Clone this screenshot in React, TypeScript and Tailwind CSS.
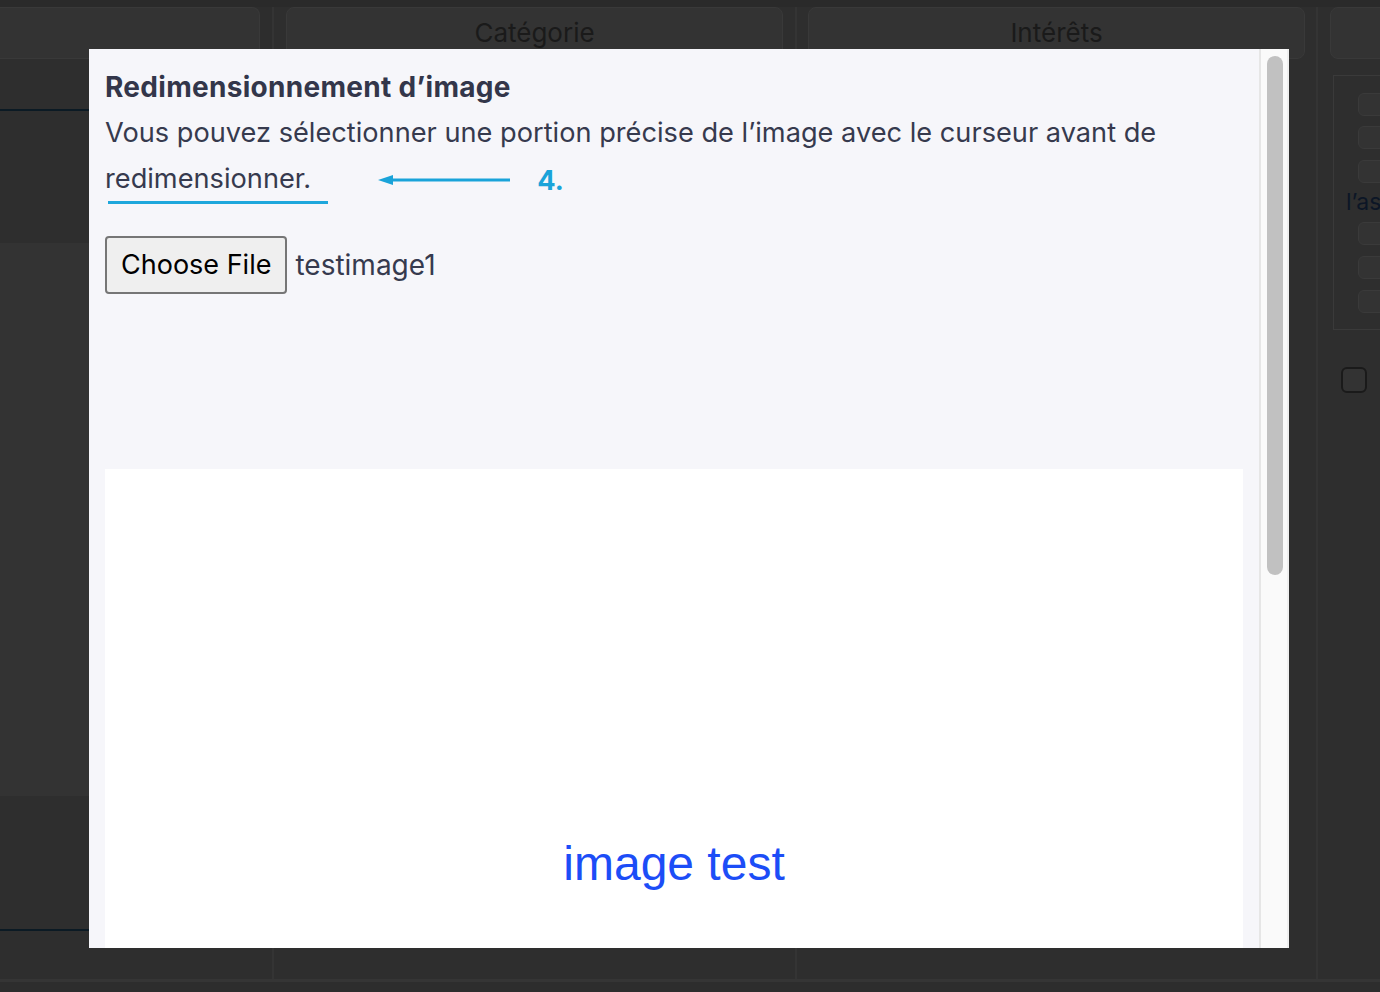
export default function App() {
  return (
    <div className="relative w-[1380px] h-[992px] overflow-hidden bg-[#2d2d2d] font-['Inter','Noto_Sans',sans-serif]">
      <div className="h-[7px] bg-[#2a2a2a]" />
      <div className="flex h-[972px]">
        {/* column 1 */}
        <div className="w-[272px] flex flex-col">
          <div className="h-[52px] mr-[12px] shrink-0 rounded-r-lg bg-[#333333] border border-l-0 border-[#393939]" />
          <div className="h-[50px] shrink-0 bg-[#2e2e2e]" />
          <div className="h-[2px] shrink-0 bg-[#0b1a24]" />
          <div className="h-[132px] shrink-0 bg-[#2e2e2e]" />
          <div className="h-[553px] shrink-0 bg-[#333333]" />
          <div className="h-[133px] shrink-0 bg-[#2e2e2e]" />
          <div className="h-[2px] shrink-0 bg-[#0b1a24]" />
          <div className="flex-1 bg-[#2e2e2e]" />
        </div>
        <div className="w-[2px] bg-[#343434]" />
        {/* column 2 */}
        <div className="w-[521px] flex flex-col bg-[#2e2e2e]">
          <div className="h-[52px] mx-[12px] rounded-lg bg-[#333333] border border-[#393939] flex items-center justify-center pb-[2px] text-[26px] text-[#1a1a1a]">
            Catégorie
          </div>
        </div>
        <div className="w-[2px] bg-[#343434]" />
        {/* column 3 */}
        <div className="w-[519px] flex flex-col bg-[#2e2e2e]">
          <div className="h-[52px] ml-[11px] mr-[11px] rounded-lg bg-[#333333] border border-[#393939] flex items-center justify-center pb-[2px] text-[26px] text-[#1a1a1a]">
            Intérêts
          </div>
        </div>
        <div className="w-[2px] bg-[#343434]" />
        {/* column 4 */}
        <div className="flex-1 flex flex-col bg-[#2e2e2e]">
          <div className="h-[52px] ml-[12px] -mr-4 rounded-lg bg-[#333333] border border-[#393939]" />
          <div className="mt-[16px] ml-[15px] -mr-4 h-[255px] border border-[#3a3a3a] pt-[17px] flex flex-col">
            <div className="ml-[24px] h-[23px] rounded-md border border-[#3a3a3a] bg-[#333333]" />
            <div className="ml-[24px] mt-[10px] h-[23px] rounded-md border border-[#3a3a3a] bg-[#333333]" />
            <div className="ml-[24px] mt-[11px] h-[23px] rounded-md border border-[#3a3a3a] bg-[#333333]" />
            <div className="ml-[12px] h-[39px] flex items-center text-[23px] text-[#0c1626] whitespace-nowrap">l’as</div>
            <div className="ml-[24px] h-[23px] rounded-md border border-[#3a3a3a] bg-[#333333]" />
            <div className="ml-[24px] mt-[11px] h-[23px] rounded-md border border-[#3a3a3a] bg-[#333333]" />
            <div className="ml-[24px] mt-[11px] h-[23px] rounded-md border border-[#3a3a3a] bg-[#333333]" />
          </div>
          <div className="mt-[37px] ml-[23px] w-[26px] h-[26px] rounded-md border-2 border-[#1a1a1a] bg-[#333333]" />
        </div>
      </div>
      <div className="h-[3px] bg-[#353535]" />
      <div className="h-[10px] bg-[#2d2d2d]" />

      {/* modal */}
      <div className="absolute left-[89px] top-[49px] w-[1200px] h-[899px] bg-[#f6f6fa] flex">
        <div className="w-[1170px] h-full overflow-hidden px-4 pt-[20px]">
          <div className="text-[28px] leading-[36px] tracking-[0.3px] font-bold text-[#33364a]">Redimensionnement d’image</div>
          <div className="mt-[5px] text-[27.2px] leading-[46px] text-[#363a4e] whitespace-nowrap">
            Vous pouvez sélectionner une portion précise de l’image avec le curseur avant de
          </div>
          <div className="flex items-center h-[46px] text-[27.2px] text-[#363a4e]">
            <span className="relative">
              redimensionner.
              <span className="absolute left-[3px] top-[42px] w-[220px] h-[3px] bg-[#1ea7dc]" />
            </span>
            <svg className="ml-[67px] mt-[2px]" width="133" height="12" viewBox="0 0 133 12">
              <polygon points="0,6 15,1 15,11" fill="#1aa3d9" />
              <line x1="14" y1="6" x2="132" y2="6" stroke="#1aa3d9" strokeWidth="3" />
            </svg>
            <span className="ml-[26px] mt-[4px] font-bold text-[#1aa3d9]">4.</span>
          </div>
          <div className="mt-[34px] flex items-center">
            <div className="h-[58px] px-[14px] flex items-center rounded-[4px] border-2 border-[#767676] bg-[#efefef] text-[27px] text-black">
              Choose File
            </div>
            <span className="ml-[8px] text-[28px] text-[#363a4e]">testimage1</span>
          </div>
          <div className="mt-[175px] h-[600px] bg-white flex justify-center">
            <span className="mt-[367px] text-[48px] leading-[56px] text-[#1c4df7] font-['Liberation_Sans',Arial,sans-serif]">
              image test
            </span>
          </div>
        </div>
        <div className="w-[30px] h-full border-l-2 border-[#e6e6e6] border-r-2 border-r-[#efefef] bg-[#fafafa] pl-[6px] pr-[4px] pt-[7px]">
          <div className="h-[519px] rounded-full bg-[#c1c1c1]" />
        </div>
      </div>
    </div>
  );
}
